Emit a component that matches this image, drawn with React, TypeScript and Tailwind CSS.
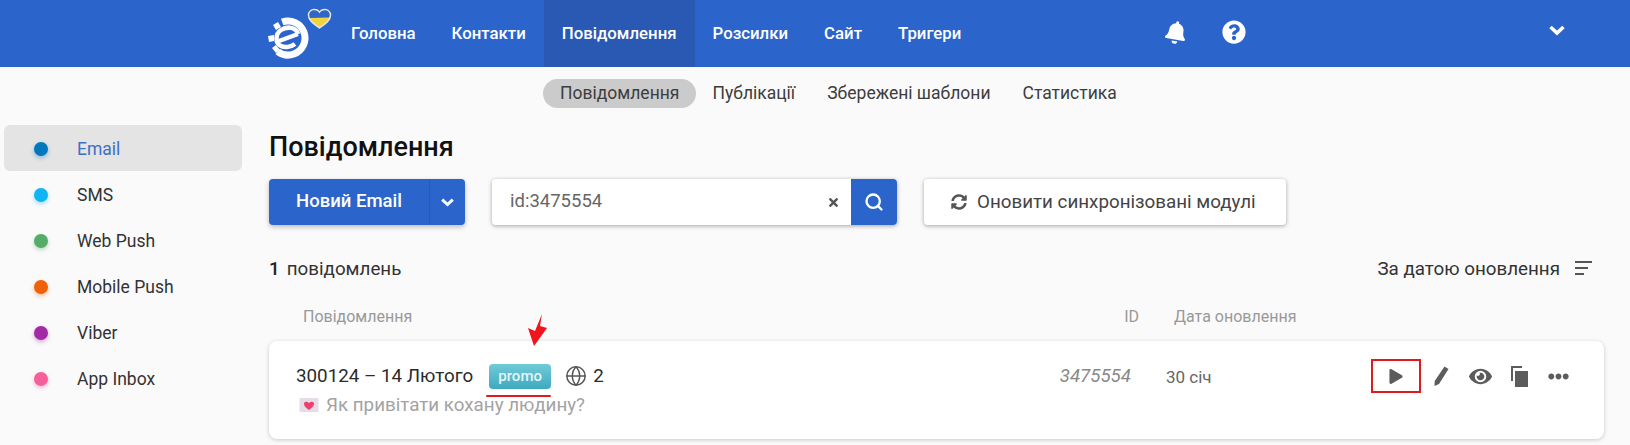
import React from "react";
import { FaBell, FaEllipsisH, FaEye, FaPlay, FaQuestionCircle, FaSyncAlt, FaTimes } from "react-icons/fa";
import { Globe, Search } from "lucide-react";

const navItems = ["Головна", "Контакти", "Повідомлення", "Розсилки", "Сайт", "Тригери"];
const subItems = ["Повідомлення", "Публікації", "Збережені шаблони", "Статистика"];

const channels = [
  { name: "Email", dot: "bg-[#0277bd]", glow: "shadow-[0_2px_4px_rgba(2,119,189,0.4)]" },
  { name: "SMS", dot: "bg-[#0fb5f2]", glow: "shadow-[0_2px_4px_rgba(15,181,242,0.4)]" },
  { name: "Web Push", dot: "bg-[#55ab68]", glow: "shadow-[0_2px_4px_rgba(85,171,104,0.4)]" },
  { name: "Mobile Push", dot: "bg-[#ef6109]", glow: "shadow-[0_2px_4px_rgba(239,97,9,0.4)]" },
  { name: "Viber", dot: "bg-[#a02ba4]", glow: "shadow-[0_2px_4px_rgba(160,43,164,0.4)]" },
  { name: "App Inbox", dot: "bg-[#f5609a]", glow: "shadow-[0_2px_4px_rgba(245,96,154,0.4)]" },
];

function Logo() {
  return (
    <svg viewBox="0 0 68 62" className="w-[68px] h-[62px] mt-[5px] shrink-0">
      {/* e mark */}
      <circle cx="23" cy="33" r="17" fill="none" stroke="#fff" strokeWidth="7" strokeDasharray="70 37" transform="rotate(-110 23 33)" />
      <path d="M33 29 C31 22 22 21 16 25 C10 29 10 38 16 41 C20 43 26 42 30 39" fill="none" stroke="#fff" strokeWidth="4.500" />
      <path d="M14 36 L33 29" fill="none" stroke="#fff" strokeWidth="4" />
      <path d="M8 20l5-3 3 5-5 3zM3 31l6-1 0 6-5 1zM7 43l4-3 4 5-4 3z" fill="#fff" />
      {/* heart */}
      <path d="M54.500 23 C47.500 18 43.500 15 43.500 10 C43.500 6.500 46.500 4.500 49 4.500 C51.500 4.500 53.500 5.500 54.500 7.500 C55.500 5.500 57.500 4.500 60 4.500 C62.500 4.500 65.500 6.500 65.500 10 C65.500 15 61.500 18 54.500 23 Z" fill="#f3d33b" stroke="#dfe8f5" strokeWidth="1.500" />
      <path d="M45 13 C44.500 12 44.300 11 44.300 10 C44.300 7 46.500 5.300 49 5.300 C51.500 5.300 53.500 6.500 54.500 8.500 C55.500 6.500 57.500 5.300 60 5.300 C62.500 5.300 64.700 7 64.700 10 C64.700 11 64.500 11.800 64 12.500 Z" fill="#2f66c8" />
    </svg>
  );
}

function LoveLetter() {
  return (
    <svg viewBox="0 0 20 16" className="w-[20px] h-[16px] shrink-0">
      <rect x="0.500" y="1" width="19" height="14" rx="1" fill="#e6dce8" />
      <path d="M10 13 C6 10 5 8.500 5 6.500 C5 4.500 8 3.800 10 6 C12 3.800 15 4.500 15 6.500 C15 8.500 14 10 10 13 Z" fill="#ef3f6d" />
    </svg>
  );
}

function Chevron({ className }: { className: string }) {
  return (
    <svg viewBox="0 0 16 11" className={className} fill="none" stroke="currentColor" strokeWidth="3.600">
      <path d="M1.500 2 L8 8 L14.500 2" />
    </svg>
  );
}

export default function App() {
  return (
    <div className="w-[1630px] h-[445px] overflow-hidden bg-[#fafafa] font-['Roboto',sans-serif] text-[#2b2b2b]">
      {/* Top bar */}
      <header className="h-[67px] bg-[#2b65cb] flex items-center pl-[265px] text-white">
        <Logo />
        <nav className="flex h-full">
          {navItems.map((item) => (
            <div
              key={item}
              className={`flex items-center px-[18px] text-[16.800px] font-medium ${item === "Повідомлення" ? "bg-[#2a59b3]" : ""}`}
            >
              {item}
            </div>
          ))}
        </nav>
        <FaBell className="ml-[186px] w-[22px] h-[23px] rotate-[10deg] mb-[3px] shrink-0" />
        <FaQuestionCircle className="ml-[35px] w-[24px] h-[24px] mb-[3px] shrink-0" />
        <Chevron className="ml-[303px] w-[16px] h-[11px] mb-[6px] shrink-0" />
      </header>

      {/* Sub menu */}
      <div className="flex pl-[543px] h-[29px] mt-[12px] text-[17.500px] text-[#3d3d3d]">
        {subItems.map((item, i) => (
          <div key={item} className={`flex items-center rounded-full ${i === 0 ? "bg-[#cbcbcb] px-[17px]" : "px-[16px]"}`}>
            {item}
          </div>
        ))}
      </div>

      <div className="flex">
        {/* Channels */}
        <aside className="w-[269px] shrink-0 pl-[4px] pt-[17px]">
          {channels.map((c) => (
            <div
              key={c.name}
              className={`w-[238px] h-[46px] flex items-center pl-[30px] pt-[2px] rounded-md ${c.name === "Email" ? "bg-[#e4e4e4]" : ""}`}
            >
              <span className={`w-[14px] h-[14px] rounded-full ${c.dot} ${c.glow}`} />
              <span className={`ml-[29px] text-[17.500px] ${c.name === "Email" ? "text-[#3f6fc6]" : "text-[#333]"}`}>{c.name}</span>
            </div>
          ))}
        </aside>

        {/* Content */}
        <main className="w-[1335px] pt-[23px]">
          <h1 className="text-[27px] leading-[32px] font-medium text-[#111]">Повідомлення</h1>

          <div className="flex mt-[16px] h-[46px]">
            <div className="w-[196px] flex bg-[#2b65cb] text-white rounded shadow-[0_2px_5px_rgba(0,0,0,0.25)]">
              <div className="w-[161px] flex items-center justify-center text-[18.500px] font-medium border-r border-[#2a59b3]">Новий Email</div>
              <div className="flex-1 flex items-center justify-center">
                <Chevron className="w-[13px] h-[9px]" />
              </div>
            </div>
            <div className="ml-[27px] w-[405px] flex bg-white rounded shadow-[0_1px_4px_rgba(0,0,0,0.35)] overflow-hidden">
              <div className="flex-1 flex items-center pl-[18px] text-[18.500px] text-[#666]">id:3475554</div>
              <div className="w-[24px] flex items-center">
                <FaTimes className="w-[13px] h-[13px] text-[#555]" />
              </div>
              <div className="w-[46px] flex items-center justify-center bg-[#2b65cb] text-white">
                <Search className="w-[20px] h-[20px]" strokeWidth={2.8} />
              </div>
            </div>
            <div className="ml-[27px] w-[362px] flex items-center pl-[27px] bg-white rounded shadow-[0_1px_4px_rgba(0,0,0,0.35)] text-[18.800px] text-[#444]">
              <FaSyncAlt className="w-[16px] h-[16px] text-[#555] mr-[10px]" />
              Оновити синхронізовані модулі
            </div>
          </div>

          <div className="flex items-center justify-between mt-[32px] h-[24px] pr-[12px] text-[18.800px]">
            <div className="text-[#333]">
              <span className="font-medium mr-[7px] text-[#222]">1</span>повідомлень
            </div>
            <div className="flex items-center text-[#333]">
              За датою оновлення
              <svg viewBox="0 0 17 14" className="w-[17px] h-[14px] ml-[15px] mb-[2px]" fill="#555">
                <rect x="0" y="0" width="17" height="2" />
                <rect x="0" y="6" width="13" height="2" />
                <rect x="0" y="12" width="9" height="2" />
              </svg>
            </div>
          </div>

          <div className="flex items-center mt-[26px] h-[20px] text-[16px] text-[#999]">
            <div className="w-[835px] pl-[34px]">Повідомлення</div>
            <div className="w-[35px] text-right">ID</div>
            <div className="ml-[35px]">Дата оновлення</div>
          </div>

          {/* Message row */}
          <div className="relative flex items-start h-[98px] w-[1335px] mt-[14px] bg-white rounded-lg shadow-[0_1px_4px_rgba(0,0,0,0.2)]">
            <div className="w-[720px] pl-[27px] pt-[22px]">
              <div className="flex items-center h-[26px] text-[18.800px] text-[#2b2b2b]">
                300124 – 14 Лютого
                <span className="relative ml-[16px] w-[62px] h-[25px] flex items-center justify-center rounded-sm bg-gradient-to-b from-[#6fcbd8] to-[#3fa9bf] text-[#e2f6f9] text-[15px] font-medium">
                  promo
                  <span className="absolute left-[-3px] top-[31px] w-[65px] h-[2px] bg-[#e01b1b] rounded-full" />
                  <svg viewBox="0 0 20 34" className="absolute left-[38px] top-[-51px] w-[20px] h-[34px]" fill="#f0141c">
                    <path d="M15 1 L13 13 L20 15 L7 33 L1 15 L8 18 Z" />
                  </svg>
                </span>
                <Globe className="ml-[14px] w-[22px] h-[22px] text-[#555]" strokeWidth={1.6} />
                <span className="ml-[6px]">2</span>
              </div>
              <div className="flex items-center mt-[2px] pl-[3px] text-[18.800px] text-[#a3a3a3]">
                <LoveLetter />
                <span className="ml-[7px]">Як привітати кохану людину?</span>
              </div>
            </div>
            <div className="ml-[50px] mt-[21px] w-[92px] text-right text-[18.700px] italic text-[#888]">3475554</div>
            <div className="ml-[35px] mt-[24px] text-[17px] text-[#666]">30 січ</div>

            {/* Actions */}
            <div className="absolute left-[1102px] top-[18px] flex items-center text-[#5c5c5c]">
              <div className="w-[50px] h-[34px] flex items-center justify-center border-[2px] border-[#e01b1b]">
                <FaPlay className="w-[14px] h-[15px]" />
              </div>
              <svg viewBox="0 0 15 20" className="ml-[13px] w-[15px] h-[20px]" fill="currentColor">
                <path d="M10.500 0.500 L14.500 3 L5 18 L0.500 20 L0.700 15 Z" />
              </svg>
              <FaEye className="ml-[20px] w-[23px] h-[23px]" />
              <svg viewBox="0 0 17 21" className="ml-[19px] w-[17px] h-[21px]" fill="currentColor">
                <path d="M0 0 H11 V2 H2 V15 H0 Z" />
                <rect x="4" y="5" width="13" height="16" />
              </svg>
              <FaEllipsisH className="ml-[20px] w-[21px] h-[21px]" />
            </div>
          </div>
        </main>
      </div>
    </div>
  );
}
